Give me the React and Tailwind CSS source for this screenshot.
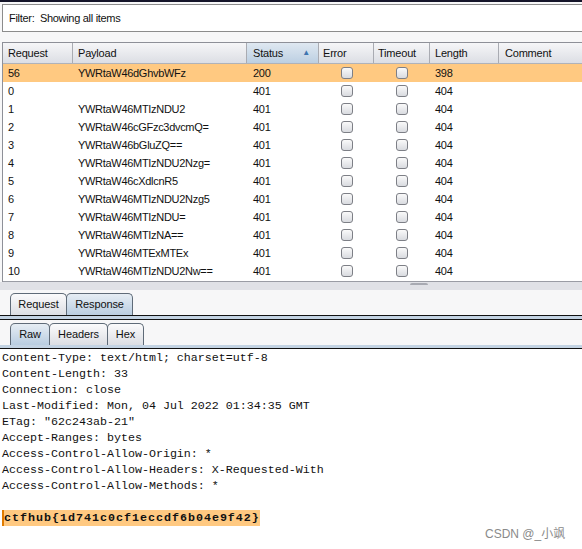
import React from "react";

const rows = [
  ["56", "YWRtaW46dGhvbWFz", "200", "398"],
  ["0", "", "401", "404"],
  ["1", "YWRtaW46MTIzNDU2", "401", "404"],
  ["2", "YWRtaW46cGFzc3dvcmQ=", "401", "404"],
  ["3", "YWRtaW46bGluZQ==", "401", "404"],
  ["4", "YWRtaW46MTIzNDU2Nzg=", "401", "404"],
  ["5", "YWRtaW46cXdlcnR5", "401", "404"],
  ["6", "YWRtaW46MTIzNDU2Nzg5", "401", "404"],
  ["7", "YWRtaW46MTIzNDU=", "401", "404"],
  ["8", "YWRtaW46MTIzNA==", "401", "404"],
  ["9", "YWRtaW46MTExMTEx", "401", "404"],
  ["10", "YWRtaW46MTIzNDU2Nw==", "401", "404"],
];

const lines = [
  "Content-Type: text/html; charset=utf-8",
  "Content-Length: 33",
  "Connection: close",
  "Last-Modified: Mon, 04 Jul 2022 01:34:35 GMT",
  'ETag: "62c243ab-21"',
  "Accept-Ranges: bytes",
  "Access-Control-Allow-Origin: *",
  "Access-Control-Allow-Headers: X-Requested-With",
  "Access-Control-Allow-Methods: *",
];

const Checkbox = () => (
  <div className="w-[12px] h-[12px] rounded-[3px] border border-[#7d7f86] bg-gradient-to-b from-[#fafafa] to-[#d9dbe0]" />
);

const Tab = ({ label, width, active }) => (
  <div
    className={
      "h-[22px] flex items-center justify-center border border-b-0 border-[#5f6b78] rounded-t-[5px] text-[11px] tracking-[-0.1px] text-[#111] -mr-px " +
      width +
      (active
        ? " bg-gradient-to-b from-[#e6edf4] to-[#b9cde0]"
        : " bg-gradient-to-b from-[#fbfbfc] to-[#dcdee3]")
    }
  >
    {label}
  </div>
);

export default function App() {
  return (
    <div
      className="relative w-[582px] h-[549px] overflow-hidden bg-[#f7f7f8] flex flex-col"
      style={{ fontFamily: '"Liberation Sans", Arial, sans-serif' }}
    >
      <div className="h-[2px] bg-[#15152a]" />

      {/* filter */}
      <div className="mt-[2px] ml-[2px] h-[28px] border border-r-0 border-[#8c8c8c] bg-white flex items-center pl-[6px] text-[11px] tracking-[-0.3px] text-[#111]">
        Filter:&nbsp; Showing all items
      </div>

      {/* table */}
      <div className="mt-[10px] ml-[2px] border-l border-t border-[#8e9098] bg-white">
        <div className="grid grid-cols-[70px_174px_72px_55px_56px_69px_1fr] h-[21px] text-[11px] tracking-[-0.2px] text-[#111] border-b border-[#b0b2b8]">
          <div className="pl-[5px] flex items-center border-r border-[#a9abb2] bg-gradient-to-b from-[#f6f6f8] to-[#dcdee4]">Request</div>
          <div className="pl-[5px] flex items-center border-r border-[#a9abb2] bg-gradient-to-b from-[#f6f6f8] to-[#dcdee4]">Payload</div>
          <div className="pl-[6px] pr-[8px] flex items-center justify-between border-r border-[#a9abb2] bg-gradient-to-b from-[#dfe8f1] to-[#bccfe2]">
            <span>Status</span>
            <span className="text-[8px] text-[#3f74b0]">▲</span>
          </div>
          <div className="pl-[4px] flex items-center border-r border-[#a9abb2] bg-gradient-to-b from-[#f6f6f8] to-[#dcdee4]">Error</div>
          <div className="pl-[4px] flex items-center border-r border-[#a9abb2] bg-gradient-to-b from-[#f6f6f8] to-[#dcdee4]">Timeout</div>
          <div className="pl-[5px] flex items-center border-r border-[#a9abb2] bg-gradient-to-b from-[#f6f6f8] to-[#dcdee4]">Length</div>
          <div className="pl-[6px] flex items-center bg-gradient-to-b from-[#f6f6f8] to-[#dcdee4]">Comment</div>
        </div>
        {rows.map((r, i) => (
          <div
            key={r[0]}
            className={
              "grid grid-cols-[70px_174px_72px_55px_56px_69px_1fr] h-[18px] items-center text-[11px] tracking-[-0.3px] text-[#111]" +
              (i === 0 ? " bg-[#ffc981]" : "")
            }
          >
            <div className="pl-[5px]">{r[0]}</div>
            <div className="pl-[5px]">{r[1]}</div>
            <div className="pl-[6px]">{r[2]}</div>
            <div className="flex justify-center"><Checkbox /></div>
            <div className="flex justify-center"><Checkbox /></div>
            <div className="pl-[5px]">{r[3]}</div>
            <div />
          </div>
        ))}
        <div className="h-[2px] border-b border-[#9a9ca4]" />
      </div>

      {/* splitter */}
      <div className="h-[8px] bg-[#e0e1e6] pl-[410px]">
        <div className="w-[18px] h-[2px] mt-[1px] bg-[#a8aab2] rounded-t" />
      </div>

      {/* outer tabs */}
      <div className="mt-[3px] flex pl-[10px]">
        <Tab label="Request" width="w-[57px]" />
        <Tab label="Response" width="w-[67px]" active />
      </div>
      <div className="h-[5px] border-t border-b border-[#111] bg-[#c3d3e3]" />

      {/* inner tabs */}
      <div className="mt-[3px] flex pl-[10px]">
        <Tab label="Raw" width="w-[40px]" active />
        <Tab label="Headers" width="w-[59px]" />
        <Tab label="Hex" width="w-[37px]" />
      </div>
      <div className="h-[4px] border-b border-[#111] bg-[#c3d3e3]" />

      {/* body */}
      <div
        className="flex-1 bg-white pl-[2px] pt-[1px] text-[11.67px] leading-[16px] text-[#111] whitespace-pre"
        style={{ fontFamily: '"Liberation Mono", "Courier New", monospace' }}
      >
        {lines.map((l) => (
          <div key={l}>{l}</div>
        ))}
        <div>&nbsp;</div>
        <div className="flex">
          <div className="flex bg-[#ffc981]">
            <div className="w-[2px] bg-[#e07b00]" />
            <span className="font-bold tracking-[1px]">ctfhub{"{1d741c0cf1eccdf6b04e9f42}"}</span>
          </div>
        </div>
      </div>

      <div className="absolute left-[485px] top-[525px] text-[12px] text-[#8a8a8a]" style={{ fontFamily: '"Liberation Sans", "Noto Sans CJK SC", sans-serif' }}>
        CSDN @_小飒
      </div>
    </div>
  );
}
